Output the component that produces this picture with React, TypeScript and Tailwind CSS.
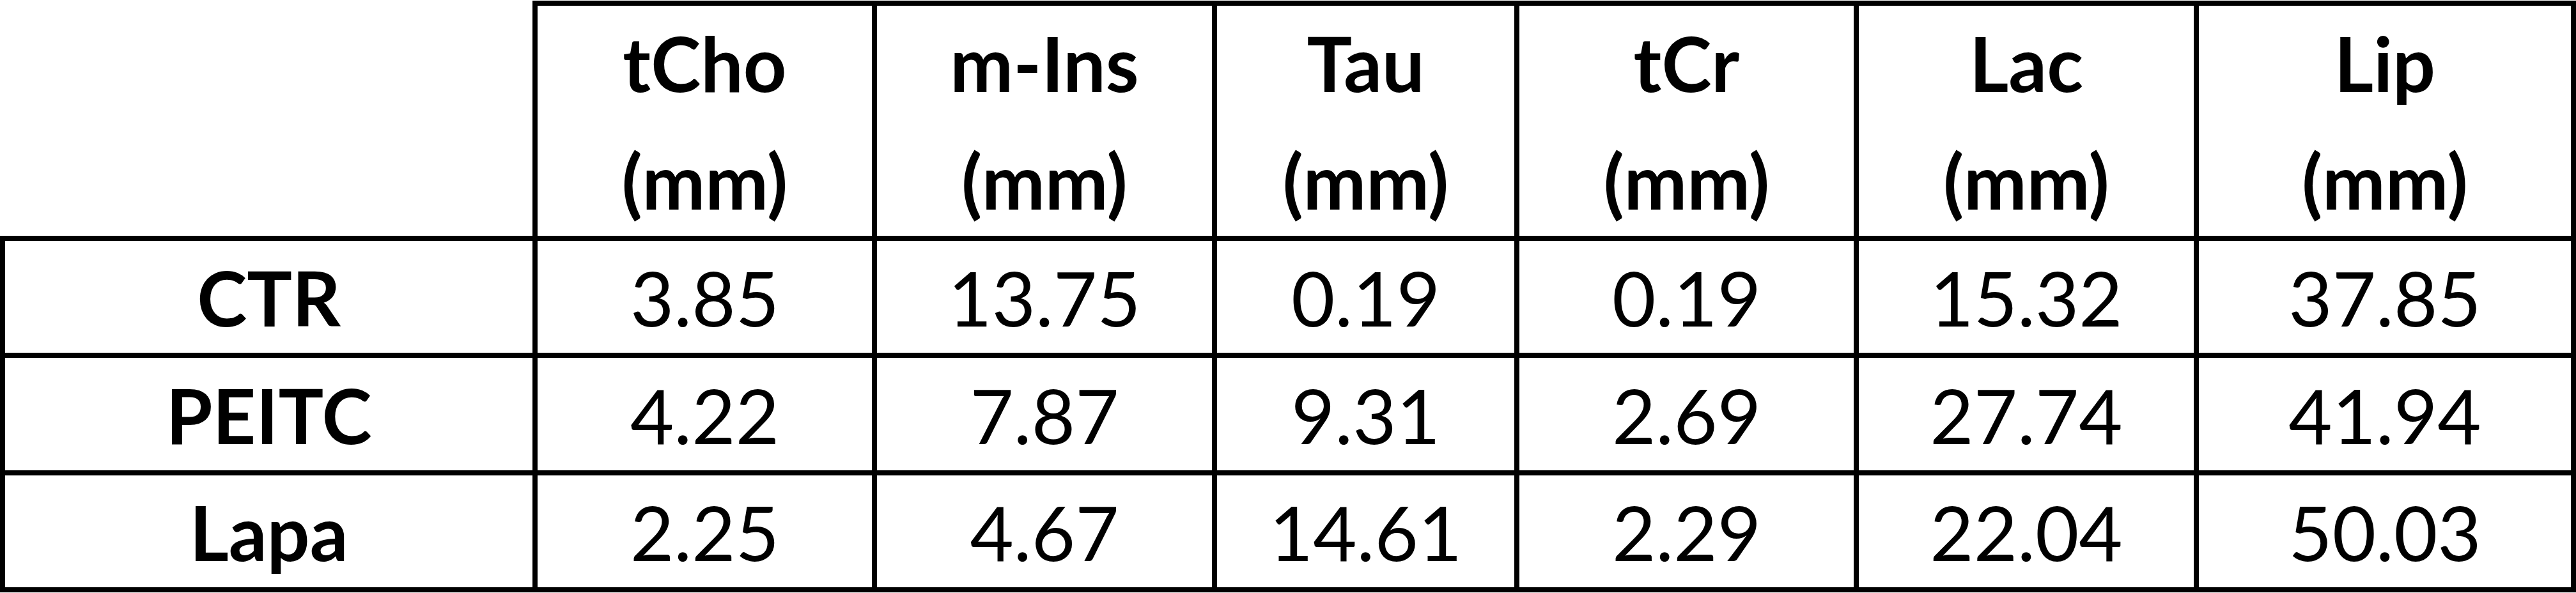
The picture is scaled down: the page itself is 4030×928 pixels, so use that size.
import React from "react";

// 測量數據
const columns = ["tCho", "m-Ins", "Tau", "tCr", "Lac", "Lip"];

const rows = [
  { name: "CTR", values: ["3.85", "13.75", "0.19", "0.19", "15.32", "37.85"] },
  { name: "PEITC", values: ["4.22", "7.87", "9.31", "2.69", "27.74", "41.94"] },
  { name: "Lapa", values: ["2.25", "4.67", "14.61", "2.29", "22.04", "50.03"] },
];

const App = () => {
  return (
    <div
      className="w-[4030px] h-[928px] bg-white text-black pt-[1px]"
      style={{ fontFamily: "Lato, 'Open Sans', sans-serif" }}
    >
      <div className="grid grid-cols-[841px_531px_532px_473px_531px_532px_590px] grid-rows-[376px_183px_184px_183px]">
        {/* 表頭 */}
        <div className="border-r-8 border-b-8 border-black" />
        {columns.map((col) => (
          <div
            key={col}
            className="border-t-8 border-r-8 border-b-8 border-black flex flex-col items-center justify-center font-bold text-[118px] pt-[3px]"
          >
            <span className="leading-[184px] whitespace-nowrap">{col}</span>
            <span className="leading-[184px] whitespace-nowrap">(mm)</span>
          </div>
        ))}

        {/* 資料列 */}
        {rows.map((row) => (
          <React.Fragment key={row.name}>
            <div className="border-l-8 border-r-8 border-b-8 border-black flex items-center justify-center font-bold text-[118px] leading-none pt-[3px]">
              {row.name}
            </div>
            {row.values.map((v, i) => (
              <div
                key={i}
                className="border-r-8 border-b-8 border-black flex items-center justify-center text-[118px] leading-none pt-[3px]"
              >
                {v}
              </div>
            ))}
          </React.Fragment>
        ))}
      </div>
    </div>
  );
};

export default App;
